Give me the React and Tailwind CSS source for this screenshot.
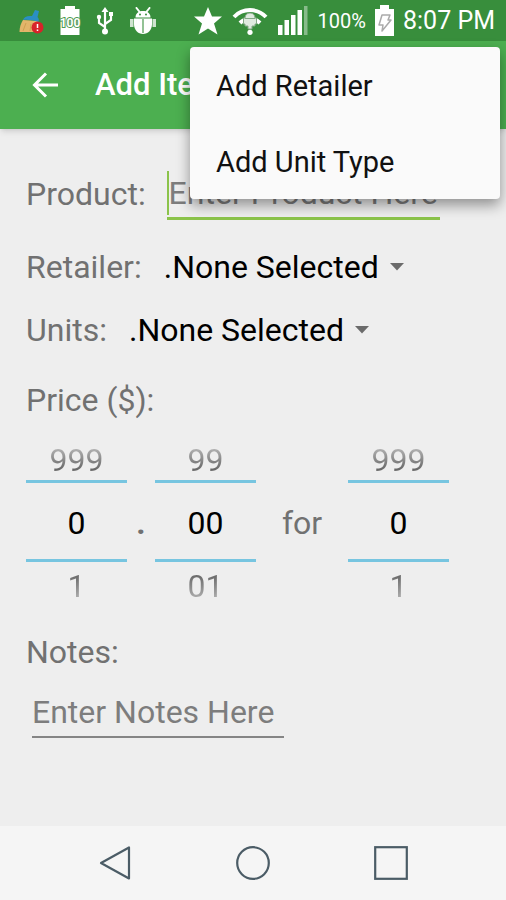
import React, { useState } from "react";

const BroomIcon = () => (
  <svg width="26" height="26" viewBox="0 0 26 26" aria-hidden="true">
    <path d="M5 12C3 15 1.500 19 1.500 24H20V13z" fill="#e3b56a" />
    <path d="M8 15l-3 8M13 16l-1 7" stroke="#cf9f50" strokeWidth="1" />
    <path d="M5 12c1-3 4-4.500 9-4l3-6 4 1-1.500 6c1.500 1.500 1.500 3 1 5C15 12 10 11.500 5 12z" fill="#2a8fc4" />
    <circle cx="19.500" cy="19.500" r="6" fill="#d8232a" />
    <path d="M19.500 16v4M19.500 21.500v1.500" stroke="#fff" strokeWidth="1.500" />
  </svg>
);

const BatteryFullIcon = () => (
  <svg width="22" height="30" viewBox="0 0 22 30" aria-hidden="true">
    <path d="M6 0h10v3h4.500v26h-19V3H6z" fill="#fff" />
    <text
      x="11"
      y="21"
      textAnchor="middle"
      fontFamily="Roboto, sans-serif"
      fontSize="12"
      fontWeight="700"
      fill="#fff"
      stroke="#4f9a52"
      strokeWidth="2"
      paintOrder="stroke"
    >
      100
    </text>
  </svg>
);

const UsbIcon = () => (
  <svg width="18" height="28" viewBox="0 0 18 28" fill="none" stroke="#fff" strokeWidth="2.200" aria-hidden="true">
    <path d="M9 4v20M9 20l-6-4v-5M9 17l6-4V8" />
    <path d="M9 0l3.500 5h-7z" fill="#fff" stroke="none" />
    <circle cx="9" cy="24.500" r="3" fill="#fff" stroke="none" />
    <circle cx="3" cy="10" r="2.200" fill="#fff" stroke="none" />
    <path d="M13 5h4v4h-4z" fill="#fff" stroke="none" />
  </svg>
);

const BugIcon = () => (
  <svg width="28" height="28" viewBox="0 0 28 28" aria-hidden="true">
    <path d="M7.500 1l4 5M20.500 1l-4 5" stroke="#fff" strokeWidth="2" strokeLinecap="round" />
    <path d="M6.500 10.500C6.500 6.500 9.500 4 14 4s7.500 2.500 7.500 6.500z" fill="#fff" />
    <path d="M5 11.500h18V17c0 6-4 10-9 10s-9-4-9-10z" fill="#fff" />
    <path d="M1 12h3.500v8H1zM23.500 12H27v8h-3.500z" fill="#cfe3d0" />
    <path d="M14 12v14" stroke="#6fae72" strokeWidth="1.500" />
    <circle cx="11" cy="7.500" r="1" fill="#388e3c" />
    <circle cx="17" cy="7.500" r="1" fill="#388e3c" />
  </svg>
);

const StarIcon = () => (
  <svg width="28" height="28" viewBox="0 0 28 28" aria-hidden="true">
    <path d="M14 0l4 9.500h10l-8 7 3.500 11L14 21.500 4.500 27.500l3.500-11-8-7h10z" fill="#fff" />
  </svg>
);

const WifiIcon = () => (
  <svg width="36" height="28" viewBox="0 0 36 28" fill="none" aria-hidden="true">
    <path d="M2 10a22 22 0 0 1 32 0M8 16a14 14 0 0 1 20 0" stroke="#fff" strokeWidth="4" />
    <path d="M13 11c0-3 2-5 5-5s5 2 5 5h1.500v6H23v2h-3v3h-4v-3h-3v-2h-1.500v-6z" fill="#dfeadf" stroke="#84a986" />
    <path d="M13 11.500h10" stroke="#84a986" />
    <circle cx="18" cy="25.300" r="2.600" fill="#fff" />
  </svg>
);

const SignalIcon = () => (
  <svg width="30" height="30" viewBox="0 0 30 30" fill="#fff" aria-hidden="true">
    <rect x="0" y="19" width="4.500" height="10" />
    <rect x="6.500" y="14" width="4.500" height="15" />
    <rect x="13" y="9" width="4.500" height="20" />
    <rect x="19.500" y="4" width="4.500" height="25" />
    <rect x="26" y="0" width="3.500" height="29" opacity=".4" />
  </svg>
);

const ChargingIcon = () => (
  <svg width="21" height="32" viewBox="0 0 21 32" aria-hidden="true">
    <path d="M6 0h9v4h5v27H1V4h5z" fill="#fff" />
    <path d="M8 10h8l-2 5h3l-9 11 1-6H5z" fill="#fff" stroke="#aaa" strokeWidth="1.500" strokeLinejoin="round" />
  </svg>
);

const SpinnerField = ({ id, label }) => (
  <div className="flex h-12 items-center gap-[22px]">
    <label htmlFor={id}>{label}</label>
    <div className="relative">
      <select id={id} className="appearance-none bg-transparent pr-8 text-black outline-none">
        <option>.None Selected</option>
      </select>
      <svg
        className="pointer-events-none absolute top-1/2 right-2 -translate-y-1/2"
        width="14"
        height="8"
        viewBox="0 0 14 8"
        aria-hidden="true"
      >
        <path d="M0 0h14L7 7.500z" fill="#6b6b6b" />
      </svg>
    </div>
  </div>
);

const NumberPicker = ({ label, max, digits }) => {
  const [value, setValue] = useState(0);
  const show = (n) => String(n).padStart(digits, "0");
  const previous = value === 0 ? max : value - 1;
  const next = value === max ? 0 : value + 1;

  return (
    <div className="flex w-[101px] flex-col">
      <button
        className="h-10 bg-linear-to-b from-[#b4b4b4] from-20% to-[#606060] to-80% bg-clip-text text-transparent"
        onClick={() => setValue(previous)}
      >
        {show(previous)}
      </button>
      <input
        type="text"
        aria-label={label}
        className="h-[82px] w-full border-y-[3px] border-[#77c5e0] bg-transparent pt-1 text-center text-black outline-none"
        value={show(value)}
        readOnly
      />
      <button
        className="h-12 bg-linear-to-b from-[#606060] from-20% to-[#b4b4b4] to-80% bg-clip-text text-transparent"
        onClick={() => setValue(next)}
      >
        {show(next)}
      </button>
    </div>
  );
};

const App = () => {
  const [product, setProduct] = useState("");
  const [notes, setNotes] = useState("");

  return (
    <div className="relative flex min-h-screen flex-col bg-[#eeeeee] font-[Roboto,sans-serif] text-[32px] leading-10 text-[#717171]">
      {/* Status bar */}
      <div className="flex h-[41px] items-center justify-between bg-[#388e3c] pr-[11px] pl-[18px] text-white">
        <div className="flex items-center gap-[15px]">
          <BroomIcon />
          <BatteryFullIcon />
          <UsbIcon />
          <BugIcon />
        </div>
        <div className="flex items-center gap-2">
          <div className="mr-0.5 flex items-center gap-2.5">
            <StarIcon />
            <WifiIcon />
            <SignalIcon />
          </div>
          <span className="text-xl">100%</span>
          <ChargingIcon />
          <span className="text-[25px]">8:07 PM</span>
        </div>
      </div>

      {/* App bar */}
      <header className="z-10 flex h-[88px] items-center bg-[#4caf50] px-8 text-white shadow-md">
        <button aria-label="Back" className="mr-9">
          <svg width="27" height="26" viewBox="0 0 27 26" fill="none" stroke="#fff" strokeWidth="3" aria-hidden="true">
            <path d="M26 13H3M14 1.500L2.500 13 14 24.500" />
          </svg>
        </button>
        <h1 className="text-[31px] font-medium">Add Item</h1>
      </header>

      {/* Overflow menu */}
      <div
        role="menu"
        className="absolute top-[47px] right-[6px] z-20 w-[310px] rounded-sm bg-[#fafafa] text-[29px] text-[#111] shadow-[0_6px_14px_rgba(0,0,0,0.4)]"
      >
        <button role="menuitem" className="block h-19 w-full px-[26px] pt-0.5 text-left">
          Add Retailer
        </button>
        <button role="menuitem" className="block h-19 w-full px-[26px] pt-0.5 text-left">
          Add Unit Type
        </button>
      </div>

      {/* Item form */}
      <main className="flex-1 px-[26px] pt-10">
        <div className="flex items-center gap-[21px]">
          <label htmlFor="product" className="pb-0.5">
            Product:
          </label>
          <div className="flex h-[51px] w-[273px] items-center border-b-[3px] border-[#8bc34a]">
            <span className="h-11 w-0.5 bg-[#8bc34a]" />
            <input
              id="product"
              type="text"
              className="w-full min-w-0 bg-transparent outline-none placeholder:text-[#7d7d7d]"
              placeholder="Enter Product Here"
              value={product}
              onChange={(e) => setProduct(e.target.value)}
            />
          </div>
        </div>

        <div className="mt-[23px] flex flex-col gap-[15px]">
          <SpinnerField id="retailer" label="Retailer:" />
          <SpinnerField id="units" label="Units:" />
        </div>

        <p className="mt-[22px] flex h-12 items-center">Price ($):</p>
        <div className="mt-4 flex items-center">
          <NumberPicker label="Dollars" max={999} digits={1} />
          <span className="w-7 pb-1 text-center font-bold">.</span>
          <NumberPicker label="Cents" max={99} digits={2} />
          <span className="w-[92px] pb-1 text-center">for</span>
          <NumberPicker label="Quantity" max={999} digits={1} />
        </div>

        <label htmlFor="notes" className="mt-[18px] flex h-12 items-center">
          Notes:
        </label>
        <input
          id="notes"
          type="text"
          className="mt-3 ml-[6px] h-[50px] w-[252px] border-b-2 border-[#858585] bg-transparent outline-none placeholder:text-[#7d7d7d]"
          placeholder="Enter Notes Here"
          value={notes}
          onChange={(e) => setNotes(e.target.value)}
        />
      </main>

      {/* Navigation bar */}
      <nav className="flex h-[74px] items-center justify-center bg-[#f5f5f5]">
        <button aria-label="Back" className="flex w-[138px] justify-center">
          <svg width="34" height="34" viewBox="0 0 34 34" fill="none" stroke="#4b5c66" strokeWidth="2.200" aria-hidden="true">
            <path d="M31 1.500v31L3 17z" strokeLinejoin="round" />
          </svg>
        </button>
        <button aria-label="Home" className="flex w-[138px] justify-center">
          <svg width="34" height="34" viewBox="0 0 34 34" fill="none" stroke="#4b5c66" strokeWidth="2.200" aria-hidden="true">
            <circle cx="17" cy="17" r="15.800" />
          </svg>
        </button>
        <button aria-label="Recent apps" className="flex w-[138px] justify-center">
          <svg width="34" height="34" viewBox="0 0 34 34" fill="none" stroke="#4b5c66" strokeWidth="2.200" aria-hidden="true">
            <rect x="1.200" y="1.200" width="31.600" height="31.600" />
          </svg>
        </button>
      </nav>
    </div>
  );
};

export default App;
